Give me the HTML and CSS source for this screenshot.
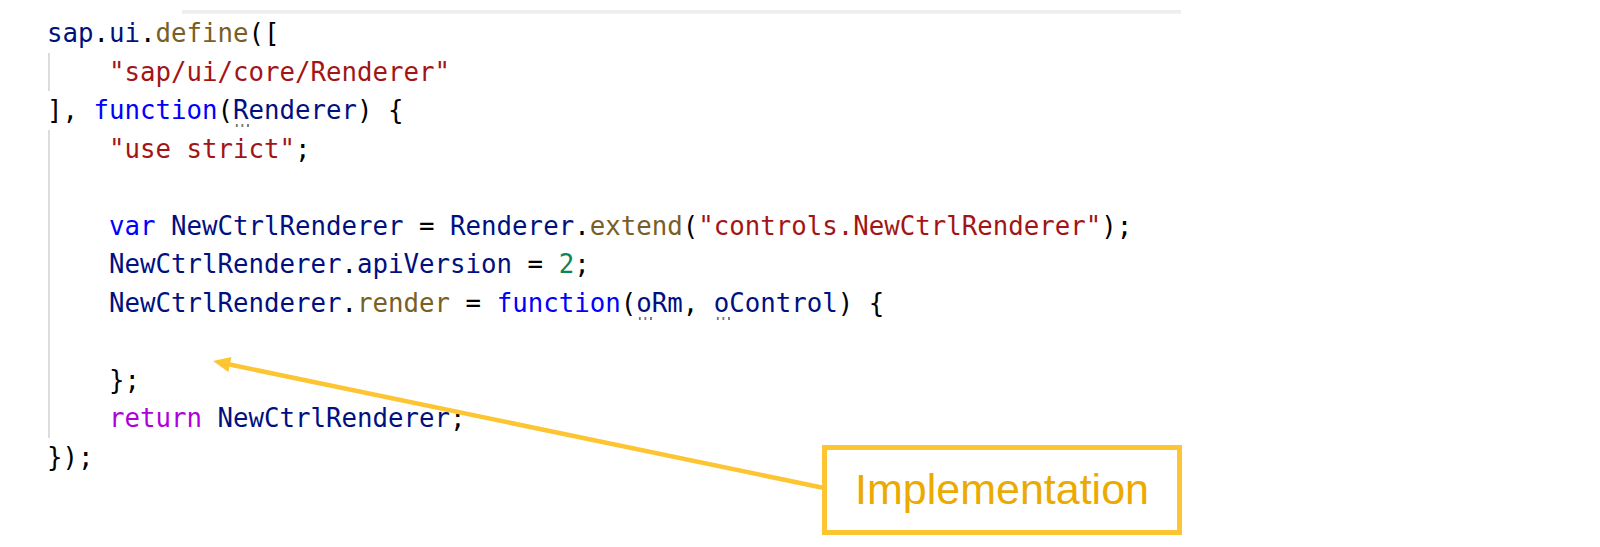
FILE: index.html
```html
<!DOCTYPE html>
<html>
<head>
<meta charset="utf-8">
<link rel="stylesheet" href="styles.css">
</head>
<body>
<div class="page">
  <div class="topbar"></div>
  <div class="code">
    <div class="ln"><span class="v">sap</span>.<span class="v">ui</span>.<span class="f">define</span>([</div>
    <div class="ln g">    <span class="s">"sap/ui/core/Renderer"</span></div>
    <div class="ln">], <span class="k">function</span>(<span class="v hint">R</span><span class="v">enderer</span>) {</div>
    <div class="ln g">    <span class="s">"use strict"</span>;</div>
    <div class="ln g"> </div>
    <div class="ln g">    <span class="k">var</span> <span class="v">NewCtrlRenderer</span> = <span class="v">Renderer</span>.<span class="f">extend</span>(<span class="s">"controls.NewCtrlRenderer"</span>);</div>
    <div class="ln g">    <span class="v">NewCtrlRenderer</span>.<span class="v">apiVersion</span> = <span class="n">2</span>;</div>
    <div class="ln g">    <span class="v">NewCtrlRenderer</span>.<span class="f">render</span> = <span class="k">function</span>(<span class="v hint">o</span><span class="v">Rm</span>, <span class="v hint">o</span><span class="v">Control</span>) {</div>
    <div class="ln g"> </div>
    <div class="ln g">    };</div>
    <div class="ln g">    <span class="r">return</span> <span class="v">NewCtrlRenderer</span>;</div>
    <div class="ln">});</div>
  </div>

  <div class="callout">
    <svg class="arrow" width="1600" height="547" viewBox="0 0 1600 547">
      <line x1="824" y1="488" x2="226" y2="363.8" stroke="#FDC532" stroke-width="4.5"/>
      <polygon points="213,361 228.4,372 231.4,357" fill="#FDC532"/>
    </svg>
    <div class="label">Implementation</div>
  </div>
</div>
</body>
</html>
```

FILE: styles.css
```css
html, body {
  margin: 0;
  padding: 0;
  background: #ffffff;
}

.page {
  position: relative;
  width: 1600px;
  height: 547px;
  overflow: hidden;
  padding-top: 10px;
  box-sizing: border-box;
}

.topbar {
  margin-left: 182px;
  width: 999px;
  height: 3px;
  background: #eeeeee;
  box-shadow: 0 1px 1px rgba(0, 0, 0, 0.05);
}

.code {
  margin-top: 1px;
  padding-left: 47px;
  font-family: "DejaVu Sans Mono", monospace;
  font-size: 25.75px;
  line-height: 38.5px;
  color: #000000;
}

.ln {
  height: 38.5px;
  white-space: pre;
}

.ln.g {
  background: linear-gradient(#dcdcdc, #dcdcdc) no-repeat 1px 0 / 2px 100%;
}

.v { color: #001080; }
.f { color: #795E26; }
.s { color: #A31515; }
.k { color: #0000FF; }
.r { color: #AF00DB; }
.n { color: #098658; }

.hint {
  position: relative;
}

.hint::after {
  content: "";
  position: absolute;
  left: 1px;
  top: 29px;
  width: 17px;
  height: 3px;
  background: radial-gradient(circle, #777777 1.1px, transparent 1.4px) 0 0 / 5.6px 3px repeat-x;
}

.callout {
  position: absolute;
  left: 0;
  top: 0;
  width: 1600px;
  height: 547px;
  pointer-events: none;
}

.arrow {
  position: absolute;
  left: 0;
  top: 0;
}

.label {
  position: absolute;
  left: 822px;
  top: 445px;
  width: 360px;
  height: 90px;
  box-sizing: border-box;
  border: 5px solid #FDC532;
  background: #ffffff;
  display: flex;
  align-items: center;
  justify-content: center;
  font-family: "Liberation Sans", Arial, sans-serif;
  font-size: 43px;
  color: #EBAA00;
  padding-bottom: 2px;
}
```
